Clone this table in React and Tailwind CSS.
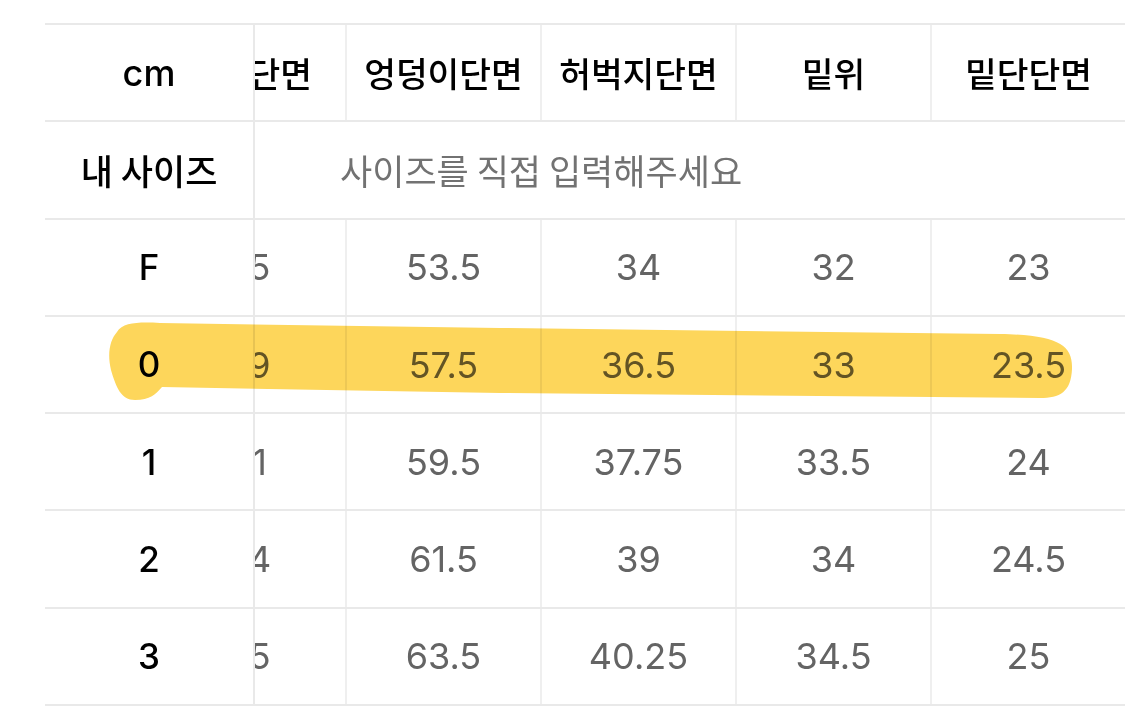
import React, { useLayoutEffect, useRef } from 'react';

const columns = ['허리단면', '엉덩이단면', '허벅지단면', '밑위', '밑단단면'];

const rows = [
    { size: 'F', values: ['25', '53.5', '34', '32', '23'] },
    { size: '0', values: ['29', '57.5', '36.5', '33', '23.5'] },
    { size: '1', values: ['31', '59.5', '37.75', '33.5', '24'] },
    { size: '2', values: ['34', '61.5', '39', '34', '24.5'] },
    { size: '3', values: ['35', '63.5', '40.25', '34.5', '25'] },
];

const ko = { fontFamily: '"Noto Sans CJK KR", "Noto Sans", sans-serif' };
const num = { fontFamily: 'Inter, "Noto Sans CJK KR", sans-serif' };

function Highlight() {
    return (
        <svg className="absolute left-0 top-0 pointer-events-none mix-blend-multiply" width="1125" height="727">
            <path
                d="M117 332 C123 322 140 322 160 323 L500 328 L1000 334 C1058 335 1073 345 1072 369 C1071 392 1060 398 1040 398 L500 393 L162 387 C156 394 150 400 135 400 C121 400 116 387 111 370 C107 353 110 340 117 332 Z"
                fill="#fdd65b"
            />
        </svg>
    );
}

export default function App() {
    const scrollRef = useRef(null);

    useLayoutEffect(() => {
        if (scrollRef.current) scrollRef.current.scrollLeft = 103;
    }, []);

    return (
        <div className="relative w-[1125px] h-[727px] overflow-hidden bg-white pt-[23px] pl-[45px]">
            <div className="flex">
                {/* sticky size column */}
                <div className="w-[208px] shrink-0 border-b-2 border-[#e9e9e9]">
                    <div className="h-[97.3px] border-t-2 border-[#e9e9e9] flex items-center justify-center text-[36px] font-medium text-black" style={num}>
                        cm
                    </div>
                    <div className="h-[97.3px] border-t-2 border-[#e9e9e9] flex items-center justify-center text-[35px] font-medium text-black" style={ko}>
                        내 사이즈
                    </div>
                    {rows.map((r) => (
                        <div key={r.size} className="h-[97.3px] border-t-2 border-[#e9e9e9] flex items-center justify-center text-[35px] font-medium text-black" style={num}>
                            {r.size}
                        </div>
                    ))}
                </div>

                {/* scrolled measurement columns */}
                <div ref={scrollRef} className="flex-1 overflow-hidden border-l-2 border-[#e9e9e9]">
                    <div className="w-[975px] border-b-2 border-[#e9e9e9]">
                        <div className="grid grid-cols-[repeat(5,195px)] h-[97.3px] border-t-2 border-[#e9e9e9]">
                            {columns.map((c) => (
                                <div key={c} className="flex items-center justify-center border-r-2 border-[#efefef] text-[34.5px] font-medium text-black" style={ko}>
                                    {c}
                                </div>
                            ))}
                        </div>
                        <div className="h-[97.3px] border-t-2 border-[#e9e9e9] flex items-center pl-[188px] text-[35px] text-[#727272]" style={ko}>
                            사이즈를 직접 입력해주세요
                        </div>
                        {rows.map((r) => (
                            <div key={r.size} className="grid grid-cols-[repeat(5,195px)] h-[97.3px] border-t-2 border-[#e9e9e9]">
                                {r.values.map((v, i) => (
                                    <div key={i} className="flex items-center justify-center border-r-2 border-[#efefef] text-[36px] text-[#646464]" style={num}>
                                        {v}
                                    </div>
                                ))}
                            </div>
                        ))}
                    </div>
                </div>
            </div>
            <Highlight />
        </div>
    );
}
